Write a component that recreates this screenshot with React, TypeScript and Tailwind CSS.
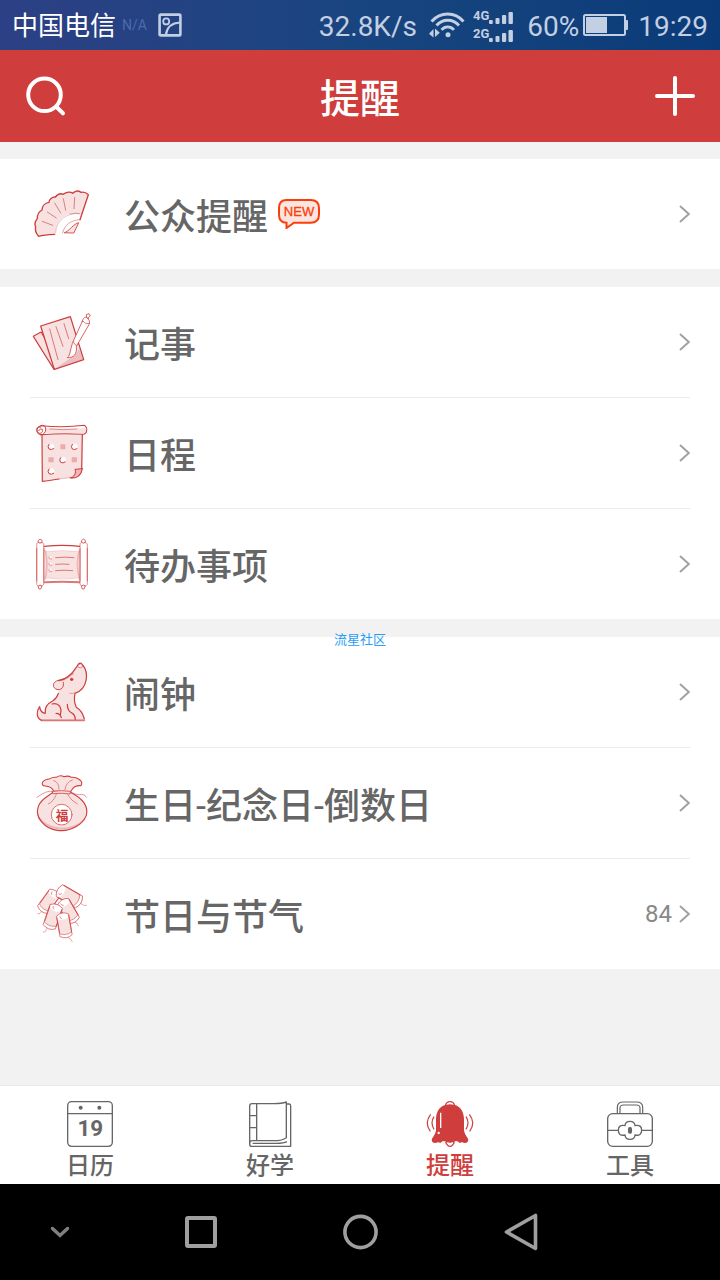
import type { ReactNode } from "react";

const RED = "#cf3d3d";
const PINK = "#f7e1e1";

/* ---------- status bar icons ---------- */

function PictureIcon() {
  return (
    <svg className="h-6 w-6" viewBox="0 0 24 24" fill="none" stroke="#c3cfe2" aria-hidden="true">
      <rect x="1.6" y="1.6" width="20.8" height="20.8" rx="1" strokeWidth="2.6" />
      <circle cx="8.2" cy="8.4" r="3" strokeWidth="1.8" />
      <path d="M8 21.5C9 14 14 10 22 9.5" strokeWidth="2.2" />
    </svg>
  );
}

function WifiIcon() {
  return (
    <svg className="h-8 w-9" viewBox="0 0 36 32" fill="none" stroke="#c3cfe2" aria-hidden="true">
      <path d="M2.5 12.5C11.5 2.5 26 2.5 34.5 12.5" strokeWidth="2.8" />
      <path d="M7.5 16.5C13.5 9.5 24 9.5 30 16.5" strokeWidth="2.8" />
      <path d="M12.5 20.8C16 16.8 21.5 16.8 25 20.8" strokeWidth="2.8" />
      <circle cx="19" cy="25.8" r="2.5" fill="#c3cfe2" stroke="none" />
      <path d="M4.5 20v8.5l-4.5-3.7zM6 19.5v8.5l4.8-4.2z" fill="#c3cfe2" stroke="none" />
    </svg>
  );
}

function SignalBars() {
  return (
    <svg className="h-3 w-6" viewBox="0 0 24 12" fill="#c3cfe2" aria-hidden="true">
      <rect x="0" y="8" width="3.8" height="4" rx="1" />
      <rect x="6.5" y="6" width="4" height="6" rx="1" />
      <rect x="13" y="3" width="4.2" height="9" rx="1" />
      <rect x="19.5" y="0" width="4.4" height="12" rx="1" />
    </svg>
  );
}

function BatteryIcon() {
  return (
    <svg className="h-6 w-[45px]" viewBox="0 0 45 24" fill="none" aria-hidden="true">
      <rect x="1" y="2" width="41" height="20" rx="1.5" stroke="#c3cfe2" strokeWidth="2" />
      <rect x="3" y="4" width="21" height="16" fill="#c3cfe2" />
      <path d="M42 7h2q1 0 1 1v8q0 1-1 1h-2z" fill="#c3cfe2" />
    </svg>
  );
}

/* ---------- list icons ---------- */

function Sketch({ top, children }: { top: number; children: ReactNode }) {
  return (
    <svg
      className="h-[60px] w-[60px] shrink-0"
      viewBox={`36 ${top} 180 180`}
      fill="none"
      stroke={RED}
      strokeWidth="3"
      strokeLinecap="round"
      strokeLinejoin="round"
      aria-hidden="true"
    >
      {children}
    </svg>
  );
}

function FanIcon() {
  return (
    <Sketch top={42}>
      <path
        d="M56 199C50 192 43 184 47 171C43 163 46 153 52 146C51 134 57 125 66 120C66 108 75 99 87 97C87 88 97 80 106 81C113 72 123 70 130 73C139 65 151 64 158 70C166 62 176 62 183 67C190 65 200 69 205 74L180 150C168 146 160 152 150 157C136 163 130 176 129 190C111 192 80 193 56 199Z"
        fill={PINK}
        stroke="none"
      />
      <path d="M183 130C145 124 106 146 107 192L126 192C129 169 149 152 180 150Z" fill="#fff" stroke="none" />
      <path
        d="M104 193C85 194 67 196 56 199C50 192 43 184 47 171C43 163 46 153 52 146C51 134 57 125 66 120C66 108 75 99 87 97C87 88 97 80 106 81C113 72 123 70 130 73C139 65 151 64 158 70C166 62 176 62 183 67C190 65 200 69 205 74L180 149"
        strokeWidth="4"
      />
      <path d="M107 188C108 150 143 127 178 131" strokeWidth="1.4" opacity=".6" />
      <path d="M150 132Q165 128 180 131M128 188C133 166 152 150 180 149" strokeWidth="2" opacity=".7" />
      <path d="M134 188C147 184 161 161 176 158L162 188Z" fill={PINK} strokeWidth="2.6" />
      <path d="M67 154L98 166M82 126L109 144M104 99L122 129M130 86L137 121M164 82L162 116" strokeWidth="2.4" opacity=".75" />
    </Sketch>
  );
}

function NotesIcon() {
  return (
    <Sketch top={36}>
      <path d="M63 96L40 109L102 208L120 190Z" fill={PINK} strokeWidth="3.4" />
      <path d="M62 78L151 50L191 179L103 208Z" fill={PINK} strokeWidth="3.8" />
      <path d="M190 178L104 207L165 165L178 147Z" fill="#d98b8b" stroke="none" opacity=".4" />
      <path d="M89 87L114 179M108 80L129 139M132 71L146 116" strokeWidth="2.6" opacity=".75" />
      <path
        d="M187 64L160 123C151 143 152 166 142 173C161 174 172 162 169 139L208 72C210 62 206 57 202 55L211 48L207 41L199 44L200 52C194 50 188 56 187 64Z"
        fill="#fff"
        strokeWidth="2.4"
      />
      <path d="M188 63Q197 74 207 71M160 125Q163 136 170 137M200 53L206 56" strokeWidth="2" />
    </Sketch>
  );
}

function ScheduleIcon() {
  return (
    <Sketch top={39}>
      <path d="M67 68L187 68V185C181 205 160 204 144 205Q103 208 68 214Z" fill={PINK} stroke="none" />
      <path d="M66 74L67 214Q85 212 117 207M187 73L185 181C179 204 162 202 151 203" strokeWidth="3.6" />
      <path d="M117 207Q135 204 151 203" strokeWidth="2" opacity=".4" />
      <path d="M187 176L165 178Q171 193 154 204Q180 207 187 176Z" fill="#efb6b6" strokeWidth="3" />
      <path d="M63 47Q130 54 192 46Q202 51 200 62Q199 71 191 73Q130 69 64 74C49 73 44 53 63 47Z" fill="#fff" strokeWidth="3.2" />
      <path d="M76 54Q140 58 199 55Q198 68 190 70Q133 66 77 70Z" fill={PINK} stroke="none" />
      <path d="M89 57Q130 61 171 57" strokeWidth="2" opacity=".8" />
      <path d="M62 47Q77 42 77 58Q77 73 62 75M61 52C52 48 47 59 53 67C60 74 71 67 67 58Q62 53 56 62" strokeWidth="3" />
      <g stroke="none" fill="#edabab">
        <rect x="121" y="103" width="15" height="15" rx="2" />
        <rect x="85" y="142" width="16" height="15" rx="2" />
        <rect x="155" y="142" width="16" height="15" rx="2" />
      </g>
      <g fill="#fff" stroke="none">
        <circle cx="94" cy="110" r="9" />
        <circle cx="164" cy="110" r="9" />
        <circle cx="129" cy="150" r="9" />
        <circle cx="94" cy="184" r="9" />
      </g>
      <path d="M87 103Q81 110 87 117Q94 121 101 116M157 103Q151 110 157 117Q164 121 171 116M122 143Q116 150 122 157Q129 161 136 156M87 177Q81 184 87 191Q94 195 101 190" strokeWidth="3" />
    </Sketch>
  );
}

function ScrollIcon() {
  return (
    <Sketch top={42}>
      <path d="M73 79Q127 73 180 79V188Q127 183 73 188Z" fill="#fff" stroke="none" />
      <path d="M75 95Q127 89 178 95V173Q127 180 75 173Z" fill={PINK} stroke="none" />
      <path d="M73 79Q127 73 180 79" strokeWidth="3.6" />
      <path d="M73 187Q127 183 180 187" strokeWidth="6" opacity=".7" />
      <path d="M75 95Q127 88 178 95M75 174Q127 181 178 174" strokeWidth="1.6" opacity=".3" />
      <path d="M76 91Q85 130 76 177M178 91Q167 130 178 177" strokeWidth="5" opacity=".25" />
      <path d="M50 72Q49 67 60 67Q71 67 71 72V193Q71 198 60 198Q49 198 50 193ZM180 72Q179 67 190 67Q201 67 202 72V193Q201 198 190 198Q180 198 180 193Z" fill="#fff" strokeWidth="1.8" opacity=".9" />
      <path d="M50 85V182M72 85V182M180 85V182M202 85V182" strokeWidth="3.6" opacity=".55" />
      <path d="M55 67Q60 73 66 67V61Q60 53 55 61ZM185 67Q190 73 196 67V61Q190 53 185 61ZM55 198Q60 192 66 198L62 207H58ZM185 198Q190 192 196 198L192 207H188Z" fill="#fff" strokeWidth="3" opacity=".8" />
      <g strokeWidth="2.6" opacity=".75">
        <path d="M107 113Q135 110 162 113M107 133Q125 131 147 133M107 152Q132 149 158 152" />
        <path d="M87 111q-2 7 8 6M87 130q-2 7 8 6M87 149q-2 7 8 6" strokeWidth="2" />
      </g>
      <g fill="#fff" stroke="none">
        <circle cx="92" cy="112" r="3" />
        <circle cx="92" cy="131" r="3" />
        <circle cx="92" cy="150" r="3" />
      </g>
    </Sketch>
  );
}

function DogIcon() {
  return (
    <Sketch top={36}>
      <path
        d="M64 211C48 203 49 183 58 170Q61 187 74 190C72 169 89 158 100 151Q113 143 116 120C99 119 98 98 115 92C139 88 158 69 171 49Q180 32 188 45C208 68 204 118 163 130Q162 154 169 173Q189 187 193 211Z"
        fill={PINK}
        stroke="none"
      />
      <path d="M76 189C72 169 87 158 99 152Q111 144 115 130M64 211C48 203 49 184 59 170Q61 188 75 190M117 91C141 88 159 68 171 49Q180 32 188 45C207 68 204 116 165 130Q160 153 169 172Q187 183 193 207" strokeWidth="3.6" />
      <path d="M116 91C97 93 94 116 114 119C128 119 132 108 130 97" strokeWidth="2.8" />
      <path d="M116 92C139 91 147 76 159 71" strokeWidth="5" opacity=".45" />
      <path d="M64 211H193" strokeWidth="5" opacity=".7" />
      <path d="M96 162C117 157 127 174 121 194M108 190Q121 190 124 203M142 163Q142 184 157 190Q165 195 166 208" strokeWidth="3.6" />
      <circle cx="155" cy="88" r="5" fill={RED} stroke="none" />
      <path d="M173 50Q181 58 188 49Q185 37 177 43Z" fill="#fff" strokeWidth="2.2" />
      <path d="M149 130Q156 132 164 129" strokeWidth="1.8" opacity=".7" />
    </Sketch>
  );
}

function PouchIcon() {
  return (
    <Sketch top={39}>
      <path d="M101 95C87 109 64 115 55 139C43 174 76 207 112 211C151 217 188 194 199 166C207 134 183 113 151 97Z" fill={PINK} strokeWidth="3.4" />
      <path d="M56 173Q76 202 121 206Q171 206 193 178" strokeWidth="6" opacity=".25" />
      <path d="M101 93Q94 79 76 78Q63 77 68 66Q74 58 90 56Q98 50 109 52Q121 44 132 50Q145 46 154 52Q169 50 180 60Q189 67 183 77Q173 76 164 80Q157 84 151 97Z" fill={PINK} strokeWidth="3.2" />
      <path d="M98 94Q124 90 152 94L150 102Q124 98 99 101Z" fill={PINK} strokeWidth="2.4" />
      <path d="M97 94Q80 90 51 112M153 97Q175 107 184 103Q195 103 200 112M101 61Q118 68 117 88M157 60Q137 67 135 89M109 103Q101 125 85 132M143 104Q154 123 172 132" strokeWidth="2.2" opacity=".75" />
      <circle cx="125" cy="164" r="31" fill="#fff" strokeWidth="2.2" />
      <text x="126" y="179" textAnchor="middle" fontSize="38" fontWeight="700" fontFamily="Noto Sans CJK SC, sans-serif" fill={RED} stroke="none">福</text>
    </Sketch>
  );
}

function Cracker({ transform }: { transform: string }) {
  return (
    <g transform={transform}>
      <path d="M-18 -30Q0 -42 18 -30V32Q0 44 -18 32Z" fill="#fff" stroke="none" />
      <path d="M-18 -20Q0 -12 18 -20V23Q0 33 -18 23Z" fill={PINK} stroke="none" />
      <path d="M-18 -30Q0 -42 18 -30V32Q0 44 -18 32Z" strokeWidth="2.4" opacity=".75" />
      <path d="M-18 -24V20M18 -26V24" strokeWidth="3" opacity=".7" />
      <path d="M-17 24Q0 33 17 24M-9 -27Q-10 -22 -5 -20" strokeWidth="2.4" opacity=".6" />
    </g>
  );
}

function CrackersIcon() {
  return (
    <Sketch top={42}>
      <path d="M64 124Q62 133 53 131M184 102Q193 110 200 106M166 157Q173 158 175 167M79 177Q79 188 70 186M144 202Q153 206 157 215" strokeWidth="2" opacity=".65" />
      <Cracker transform="translate(87 93) rotate(36) scale(1.02)" />
      <Cracker transform="translate(147 78) rotate(-60) scale(1.1)" />
      <Cracker transform="translate(145 122) rotate(-30) scale(1.05)" />
      <Cracker transform="translate(99 139) rotate(19) scale(1.05)" />
      <Cracker transform="translate(133 165) rotate(-10) scale(1 1.02)" />
    </Sketch>
  );
}

function NewBadge() {
  return (
    <svg className="ml-[9px] h-[30px] w-11" viewBox="0 0 44 30" role="img" aria-label="NEW">
      <path
        d="M9.5 1H33.5Q42 1 42 9V15.5Q42 23.8 33.5 23.8H17L9.5 29V23.8Q2 23.8 2 15.5V9Q2 1 9.5 1Z"
        fill="#fde5df"
        stroke="#fb3d0b"
        strokeWidth="2"
      />
      <text x="22" y="17" textAnchor="middle" fontSize="13" fontWeight="400" fontFamily="Liberation Sans, sans-serif" fill="#fb3d0b" stroke="#fb3d0b" strokeWidth="0.3">NEW</text>
    </svg>
  );
}

function Chevron() {
  return (
    <svg className="h-5 w-3" viewBox="0 0 12 20" fill="none" stroke="#a0a0a0" strokeWidth="1.9" aria-hidden="true">
      <path d="M2 2l8.8 8L2 18" />
    </svg>
  );
}

/* ---------- tab icons ---------- */

function TabSvg({ children }: { children: ReactNode }) {
  return (
    <svg className="h-12 w-12" viewBox="0 0 144 144" fill="none" stroke="#666" strokeWidth="4" strokeLinejoin="round" aria-hidden="true">
      {children}
    </svg>
  );
}

function CalendarIcon() {
  return (
    <TabSvg>
      <rect x="5" y="5" width="134" height="134" rx="12" />
      <path d="M5 41H139" />
      <circle cx="44" cy="23" r="6" fill="#666" stroke="none" />
      <circle cx="100" cy="23" r="6" fill="#666" stroke="none" />
      <text x="73" y="108" textAnchor="middle" fontSize="67" fontWeight="700" fontFamily="Roboto, sans-serif" fill="#666" stroke="none">19</text>
    </TabSvg>
  );
}

function BookIcon() {
  return (
    <TabSvg>
      <path d="M121 12H130Q134 12 134 18V139H17Q11 139 11 131V18Q11 11 18 11H84Q107 11 121 6V113Q109 122 84 122H19Q11 122 11 131M32 11V122M11 47H32M11 83H32M20 130H84Q111 131 123 125" />
    </TabSvg>
  );
}

function BellIcon() {
  return (
    <TabSvg>
      <g stroke={RED}>
        <path d="M58 17Q61 5 72 5Q83 5 86 17M59 126Q64 139 72 139Q80 139 85 126" />
        <path d="M72 13C41 14 31 34 30 57V91Q29 101 18 116Q14 128 29 129Q37 124 43 129Q53 117 63 128H81Q91 117 101 129Q107 124 115 129Q130 128 126 116Q115 101 114 91V57C113 34 103 14 72 13Z" fill={RED} stroke="none" />
        <path d="M64 128Q72 134 80 128" stroke="#fff" strokeWidth="3" />
        <path d="M44 38V84" stroke="#fff" strokeWidth="4" />
        <circle cx="38" cy="99" r="3.5" fill="#fff" stroke="none" />
        <path d="M14 43Q-6 68 13 94M24 50Q12 68 24 88M130 43Q150 68 131 94M120 50Q132 68 120 88" strokeWidth="3.6" />
      </g>
    </TabSvg>
  );
}

function ToolboxIcon() {
  return (
    <TabSvg>
      <rect x="5" y="41" width="134" height="98" rx="15" />
      <path d="M34 41V22Q34 6 52 6H92Q110 6 110 22V41M42 41V24Q42 15 53 15H91Q102 15 102 24V41" strokeWidth="3.6" />
      <path d="M5 91H37M107 91H139" />
      <path d="M57 77Q58 64 72 64Q86 64 87 77Q107 73 107 91Q107 109 87 105Q86 118 72 118Q58 118 57 105Q37 109 37 91Q37 73 57 77Z" />
      <rect x="66" y="81" width="12" height="20" rx="5" fill="#666" stroke="none" />
    </TabSvg>
  );
}

/* ---------- page ---------- */

type Item = { label: string; icon: ReactNode; badge?: ReactNode; count?: number };

const groups: Item[][] = [
  [{ label: "公众提醒", icon: <FanIcon />, badge: <NewBadge /> }],
  [
    { label: "记事", icon: <NotesIcon /> },
    { label: "日程", icon: <ScheduleIcon /> },
    { label: "待办事项", icon: <ScrollIcon /> },
  ],
  [
    { label: "闹钟", icon: <DogIcon /> },
    { label: "生日-纪念日-倒数日", icon: <PouchIcon /> },
    { label: "节日与节气", icon: <CrackersIcon />, count: 84 },
  ],
];

const tabs = [
  { label: "日历", icon: <CalendarIcon />, active: false },
  { label: "好学", icon: <BookIcon />, active: false },
  { label: "提醒", icon: <BellIcon />, active: true },
  { label: "工具", icon: <ToolboxIcon />, active: false },
];

function StatusBar() {
  return (
    <div className="flex h-[50px] items-center justify-between bg-linear-to-r from-[#2c4085] via-[#18457f] to-[#0a3b78] px-3 text-[28px] leading-8 text-[#c3cfe2]">
      <div className="flex items-center">
        <span className="pt-[2px] text-[26px] text-white">中国电信</span>
        <span className="ml-[6px] text-[14px] text-[#4a6cab]">N/A</span>
        <span className="ml-[11px]">
          <PictureIcon />
        </span>
      </div>
      <div className="flex items-center">
        <span className="pt-1">32.8K/s</span>
        <span className="ml-3">
          <WifiIcon />
        </span>
        <div className="ml-2 flex flex-col gap-[2px] text-[13px] leading-4 font-bold">
          <span className="flex items-end">
            4G
            <SignalBars />
          </span>
          <span className="flex items-end">
            2G
            <SignalBars />
          </span>
        </div>
        <span className="ml-[14px] pt-1">60%</span>
        <span className="ml-1">
          <BatteryIcon />
        </span>
        <span className="ml-[10px] pt-1">19:29</span>
      </div>
    </div>
  );
}

function Row({ item }: { item: Item }) {
  return (
    <li className="border-b border-[#ebebeb] last:border-b-0">
      <a href="#" className="flex h-[110px] items-center text-[#666]">
        <span className="ml-[2px]">{item.icon}</span>
        <span className="ml-8 pt-2 text-4xl font-[450]">{item.label}</span>
        {item.badge}
        <span className="ml-auto flex items-center gap-[6px] text-2xl text-[#888]">
          {item.count}
          <Chevron />
        </span>
      </a>
    </li>
  );
}

export default function App() {
  return (
    <div className="flex min-h-screen flex-col bg-[#f2f2f2] font-[Roboto,'Noto_Sans_CJK_SC',sans-serif]">
      <StatusBar />
      <header className="grid h-[92px] grid-cols-[1fr_auto_1fr] items-center bg-[#cf3d3d] px-6 text-white">
        <button type="button" aria-label="搜索" className="justify-self-start">
          <svg className="h-11 w-11" viewBox="0 0 44 44" fill="none" stroke="#fff" strokeWidth="4" strokeLinecap="round">
            <circle cx="20.5" cy="20.8" r="16.3" />
            <path d="M32.5 33l6.5 6.3" />
          </svg>
        </button>
        <h1 className="pt-2 text-[40px] leading-12 font-medium">提醒</h1>
        <button type="button" aria-label="添加" className="justify-self-end">
          <svg className="h-11 w-11" viewBox="0 0 44 44" fill="none" stroke="#fff" strokeWidth="4" strokeLinecap="round">
            <path d="M23 4v36M5 22h36" />
          </svg>
        </button>
      </header>

      <main className="relative flex flex-1 flex-col gap-[18px] pt-[17px]">
        {groups.map((items) => (
          <ul key={items[0].label} className="bg-white px-[30px]">
            {items.map((item) => (
              <Row key={item.label} item={item} />
            ))}
          </ul>
        ))}
        <span className="absolute top-[490px] left-1/2 -translate-x-1/2 text-[13px] leading-4 text-[#2a9df4]">流星社区</span>
      </main>

      <nav className="grid h-[99px] grid-cols-4 border-t border-[#e9e9e9] bg-white">
        {tabs.map((tab) => (
          <a
            key={tab.label}
            href="#"
            aria-current={tab.active ? "page" : undefined}
            className={`flex flex-col items-center pt-[14px] text-2xl leading-9 font-[450] ${tab.active ? "text-[#cf3d3d]" : "text-[#666]"}`}
          >
            {tab.icon}
            {tab.label}
          </a>
        ))}
      </nav>

      <div className="grid h-24 grid-cols-[120px_1fr_1fr_1fr_120px] items-center justify-items-center bg-black">
        <button type="button" aria-label="收起">
          <svg className="h-5 w-5" viewBox="0 0 20 20" fill="none" stroke="#808080" strokeWidth="3.4" strokeLinecap="round">
            <path d="M2.5 6.5L10 13.5l7.5-7" />
          </svg>
        </button>
        <button type="button" aria-label="最近任务">
          <svg className="h-9 w-9" viewBox="0 0 36 36" fill="none" stroke="#a09f9f" strokeWidth="4">
            <rect x="5" y="4" width="28" height="28" rx="1" />
          </svg>
        </button>
        <button type="button" aria-label="主屏幕">
          <svg className="h-9 w-9" viewBox="0 0 36 36" fill="none" stroke="#a09f9f" strokeWidth="3.6">
            <circle cx="18.5" cy="18" r="15.6" />
          </svg>
        </button>
        <button type="button" aria-label="返回">
          <svg className="h-10 w-9" viewBox="0 0 36 40" fill="none" stroke="#a09f9f" strokeWidth="3.6" strokeLinejoin="round">
            <path d="M33.5 3.5v33L4.5 20z" />
          </svg>
        </button>
      </div>
    </div>
  );
}
